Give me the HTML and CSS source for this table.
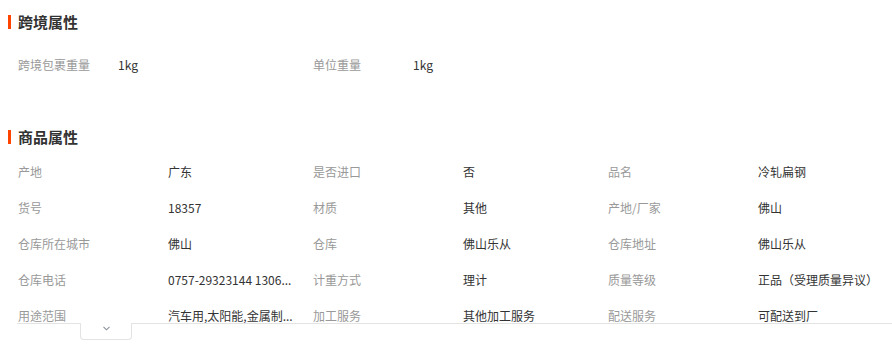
FILE: index.html
```html
<!DOCTYPE html>
<html lang="zh">
<head>
<meta charset="utf-8">
<link rel="stylesheet" href="styles.css">
</head>
<body>
<section class="sec sec-cross">
  <h2 class="sec-title">跨境属性</h2>
  <div class="grid grid-cross">
    <div class="cell"><span class="label">跨境包裹重量</span><span class="value">1kg</span></div>
    <div class="cell"><span class="label">单位重量</span><span class="value">1kg</span></div>
  </div>
</section>
<section class="sec sec-goods">
  <h2 class="sec-title">商品属性</h2>
  <div class="clip">
    <div class="grid grid-goods">
      <div class="cell"><span class="label">产地</span><span class="value">广东</span></div>
      <div class="cell"><span class="label">是否进口</span><span class="value">否</span></div>
      <div class="cell"><span class="label">品名</span><span class="value">冷轧扁钢</span></div>
      <div class="cell"><span class="label">货号</span><span class="value">18357</span></div>
      <div class="cell"><span class="label">材质</span><span class="value">其他</span></div>
      <div class="cell"><span class="label">产地/厂家</span><span class="value">佛山</span></div>
      <div class="cell"><span class="label">仓库所在城市</span><span class="value">佛山</span></div>
      <div class="cell"><span class="label">仓库</span><span class="value">佛山乐从</span></div>
      <div class="cell"><span class="label">仓库地址</span><span class="value">佛山乐从</span></div>
      <div class="cell"><span class="label">仓库电话</span><span class="value">0757-29323144 1306...</span></div>
      <div class="cell"><span class="label">计重方式</span><span class="value">理计</span></div>
      <div class="cell"><span class="label">质量等级</span><span class="value">正品（受理质量异议）</span></div>
      <div class="cell"><span class="label">用途范围</span><span class="value">汽车用,太阳能,金属制...</span></div>
      <div class="cell"><span class="label">加工服务</span><span class="value">其他加工服务</span></div>
      <div class="cell"><span class="label">配送服务</span><span class="value">可配送到厂</span></div>
    </div>
  </div>
  <button class="toggle" type="button" aria-label="展开">
    <svg width="7" height="5" viewBox="0 0 7 5"><polyline points="0.5,0.8 3.5,3.8 6.5,0.8" fill="none" stroke="#8a8f99" stroke-width="1.1"/></svg>
  </button>
</section>
</body>
</html>
```
FILE: styles.css
```css
html, body {
  margin: 0;
  padding: 0;
  background: #fff;
}
body {
  font-family: "Noto Sans CJK SC", "Microsoft YaHei", "Liberation Sans", sans-serif;
  font-size: 12px;
  color: #333;
  width: 892px;
  overflow: hidden;
}
.sec-title {
  margin: 0 0 0 8px;
  padding-left: 7px;
  border-left: 3px solid #ff4400;
  font-size: 15px;
  font-weight: bold;
  line-height: 14px;
  height: 14px;
  color: #333;
}
.sec-cross {
  padding-top: 15px;
}
.grid {
  display: grid;
  grid-template-columns: repeat(3, 275px);
  column-gap: 20px;
}
.grid-cross {
  margin-top: 18px;
  padding-left: 18px;
}
.grid-cross .label {
  width: 100px;
}
.cell {
  display: flex;
  align-items: center;
  height: 36px;
  line-height: 16px;
  min-width: 0;
}
.label {
  flex: none;
  width: 150px;
  color: #999;
}
.value {
  flex: 1;
  min-width: 0;
  color: #333;
  white-space: nowrap;
}
.sec-goods {
  margin-top: 47px;
}
.clip {
  margin-top: 10px;
  margin-left: 17px;
  padding-left: 1px;
  height: 169px;
  overflow: hidden;
  border-bottom: 1px solid #e3e3e3;
}
.grid-goods .label {
  width: 150px;
}
.toggle {
  display: flex;
  align-items: flex-start;
  justify-content: center;
  padding: 3px 0 0 0;
  margin: -1px 0 0 80px;
  box-sizing: border-box;
  width: 52px;
  height: 17px;
  border: 1px solid #e3e3e3;
  border-top: none;
  border-radius: 0 0 4px 4px;
  background: #fff;
  cursor: pointer;
}
.toggle svg {
  display: block;
}
```
